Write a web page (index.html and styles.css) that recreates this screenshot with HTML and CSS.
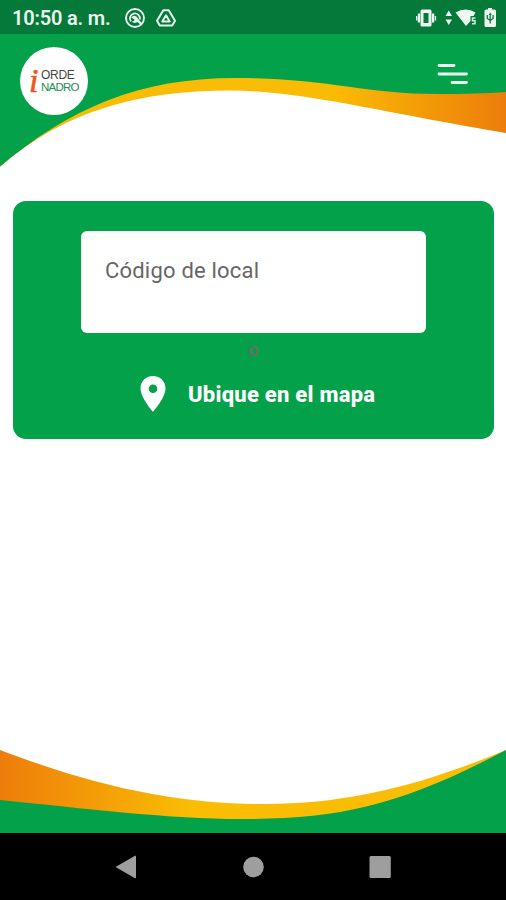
FILE: index.html
```html
<!DOCTYPE html>
<html lang="es">
<head>
<meta charset="utf-8">
<title>Orden Nadro</title>
<link rel="stylesheet" href="styles.css">
</head>
<body>
<div class="screen">
  <div class="statusbar">
    <span class="clock">10:50 a. m.</span>
    <svg class="status-left" width="54" height="22" viewBox="0 0 54 22" fill="none" stroke="#e6f4ea">
      <circle cx="12" cy="11" r="9" stroke-width="1.900"/>
      <path d="M8 14.500A5 5 0 1 1 16.800 12.500" stroke-width="1.800"/>
      <path d="M8.200 10.500q2.300-3 5.300-1l5 8-4-2.500q-4 2-5.500-.5 2.500 0 2.500-2z" fill="#e6f4ea" stroke="none"/>
      <path d="M13 11l5 6" stroke-width="2"/>
      <path d="M40.300 3.200h5.400l6.300 10.600-2.800 4.800H36.800L34 13.800z" stroke-width="2" stroke-linejoin="round"/>
      <path d="M43 8.300l3.700 6.200h-7.400z" stroke-width="2" stroke-linejoin="round"/>
    </svg>
    <svg class="status-right" width="82" height="24" viewBox="0 0 82 24" fill="#edf8ef">
      <path fill-rule="evenodd" d="M6 3.500h8q1.500 0 1.500 1.500v14q0 1.500-1.500 1.500H6q-1.500 0-1.500-1.500V5q0-1.500 1.500-1.500zM7.500 7v10h5V7z"/>
      <path d="M1.800 7.500H4v9H1.800zM0 10h1.300v4.500H0zM16 7.500h2.200v9H16zM18.800 10h1.300v4.500h-1.300zM29.500 10l3.200-5.500L36 10zM29.500 13.500H36L32.700 19z"/>
      <path d="M39.500 6.600Q49.500 .6 59.500 6.600L57.500 10h-3v5L50 20z"/>
      <path d="M59.500 12h-3v2.800h2.500v3H56" fill="none" stroke="#d4ecd9" stroke-width="1.500"/>
      <path d="M72 3.500V2h4v1.500H78.500q1.500 0 1.500 1.500v14.500q0 1.500-1.500 1.500H70q-1.500 0-1.500-1.500V5q0-1.500 1.500-1.500z"/>
      <path d="M74.200 8v9.500M71.300 9v3.500l2.900 2 2.900-2V9" fill="none" stroke="#08793a" stroke-width="1.300"/>
      <path d="M74.200 6.500l1.500 2.500h-3z" fill="#08793a"/>
    </svg>
  </div>

  <main class="content">
    <svg class="wave wave-top" width="506" height="133" viewBox="0 34 506 133">
      <defs>
        <linearGradient id="gold-top">
          <stop offset="0" stop-color="#f9bd06"/>
          <stop offset=".66" stop-color="#fabb05"/>
          <stop offset="1" stop-color="#ec7d0a"/>
        </linearGradient>
      </defs>
      <path fill="url(#gold-top)" d="M0 34H506V133C380 112 300 90.500 230 90.500C140 90.500 65 110 0 167z"/>
      <path fill="#02a14a" d="M0 34H506V92Q475 94 440 94C360 94 330 78 235 78C140 78 70 108 0 166.500z"/>
    </svg>
    <svg class="wave wave-bottom" width="506" height="84" viewBox="0 749 506 84">
      <defs>
        <linearGradient id="gold-bottom">
          <stop offset="0" stop-color="#ed7d0b"/>
          <stop offset=".38" stop-color="#fabd03"/>
          <stop offset="1" stop-color="#f9bd06"/>
        </linearGradient>
      </defs>
      <path fill="url(#gold-bottom)" d="M0 750C110 792 190 804 265 804C345 804 420 786 506 750V834H0z"/>
      <path fill="#02a14a" d="M0 800C90 809 170 819 240 819C340 819 400 806 506 750V834H0z"/>
    </svg>

    <header class="header">
      <div class="logo">
        <span class="logo-i">i</span>
        <span class="logo-words"><span class="logo-orde">ORDE</span><span class="logo-nadro">NADRO</span></span>
      </div>
      <svg class="menu" width="32" height="22" viewBox="0 0 32 22" stroke="#e9faef" stroke-width="2.800" stroke-linecap="round">
        <path d="M2 2.500H17M2 11H29.500M15 19.500H29.500"/>
      </svg>
    </header>

    <section class="card">
      <div class="field">Código de local</div>
      <div class="or">o</div>
      <div class="map-link">
        <svg width="26" height="36" viewBox="0 0 26 36"><path fill="#fff" fill-rule="evenodd" d="M13 0C5.700 0 .5 5.300.5 12.500C.5 21.500 13 36 13 36S25.500 21.500 25.500 12.500C25.500 5.300 20.300 0 13 0zM13 8.500a4.300 4.300 0 1 1 0 8.600a4.300 4.300 0 1 1 0-8.600z"/></svg>
        <span>Ubique en el mapa</span>
      </div>
    </section>
  </main>

  <nav class="navbar">
    <svg width="24" height="24" viewBox="0 0 24 24"><path fill="#9e9e9e" d="M.5 12L20 .8q1-.5 1 .6v21.200q0 1.100-1 .6z"/></svg>
    <svg width="24" height="24" viewBox="0 0 24 24"><circle cx="12.500" cy="12" r="10.300" fill="#9e9e9e"/></svg>
    <svg width="24" height="24" viewBox="0 0 24 24"><rect x="1.500" y="1" width="21.300" height="22" rx="1.500" fill="#9e9e9e"/></svg>
  </nav>
</div>
</body>
</html>
```

FILE: styles.css
```css
* { box-sizing: border-box; }
body { margin: 0; font-family: Roboto, "Liberation Sans", sans-serif; }
.screen {
  width: 506px;
  height: 900px;
  display: flex;
  flex-direction: column;
  overflow: hidden;
  background: #fff;
}
.statusbar {
  height: 34px;
  flex: none;
  display: flex;
  align-items: center;
  padding: 2px 8px 0 12px;
  background: #04793a;
}
.clock {
  width: 111px;
  white-space: nowrap;
  font-size: 20px;
  font-weight: 600;
  letter-spacing: -0.2px;
  color: #edf8ef;
}
.status-right { margin-left: auto; }
.content {
  position: relative;
  flex: 1;
}
.wave { position: absolute; left: 0; display: block; }
.wave-top { top: 0; }
.wave-bottom { bottom: 0; }
.header {
  position: relative;
  display: flex;
  justify-content: space-between;
  padding: 13px 37px 0 20px;
}
.logo {
  width: 68px;
  height: 68px;
  border-radius: 50%;
  background: #fff;
  display: flex;
  align-items: center;
  padding-left: 9px;
}
.logo-i {
  width: 12px;
  font: italic 34px/30px "Liberation Serif", serif;
  color: #e9581c;
  -webkit-text-stroke: 0.6px #e9581c;
}
.logo-words {
  display: flex;
  flex-direction: column;
  font: 12px/12px "Liberation Sans", sans-serif;
}
.logo-orde { color: #444; letter-spacing: -0.3px; }
.logo-nadro { font-size: 11.5px; color: #209052; letter-spacing: -0.8px; }
.menu { margin-top: 16px; }
.card {
  position: relative;
  width: 481px;
  height: 238px;
  margin: 86px 0 0 13px;
  padding-top: 30px;
  border-radius: 13px;
  background: #02a14a;
  display: flex;
  flex-direction: column;
  align-items: center;
}
.field {
  width: 345px;
  height: 102px;
  padding: 27px 24px;
  border-radius: 6px;
  background: #fff;
  color: #666;
  font-size: 22px;
  line-height: 26px;
  letter-spacing: 0.2px;
}
.or {
  height: 20px;
  margin-top: 7px;
  font-size: 19px;
  line-height: 20px;
  font-weight: 500;
  color: #6c6c62;
}
.map-link {
  align-self: stretch;
  display: flex;
  align-items: center;
  gap: 22px;
  margin-top: 16px;
  padding-left: 127px;
  color: #fff;
  font-size: 22px;
  font-weight: 800;
  letter-spacing: 0.25px;
  white-space: nowrap;
}
.navbar {
  height: 67px;
  flex: none;
  display: flex;
  justify-content: center;
  align-items: center;
  gap: 102.5px;
  background: #000;
}
```
